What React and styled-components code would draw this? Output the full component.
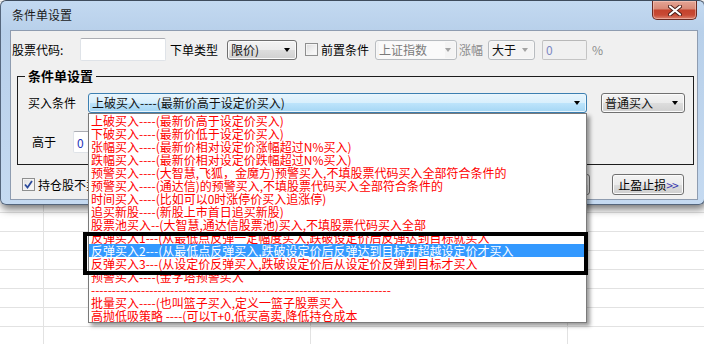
import React from 'react'
import styled, { createGlobalStyle } from 'styled-components'

const conditions = [
  '上破买入----(最新价高于设定价买入)',
  '下破买入----(最新价低于设定价买入)',
  '张幅买入----(最新价相对设定价涨幅超过N%买入)',
  '跌幅买入----(最新价相对设定价跌幅超过N%买入)',
  '预警买入----(大智慧,飞狐，金魔方)预警买入,不填股票代码买入全部符合条件的',
  '预警买入----(通达信)的预警买入,不填股票代码买入全部符合条件的',
  '时间买入----(比如可以0时涨停价买入追涨停)',
  '追买新股----(新股上市首日追买新股)',
  '股票池买入--(大智慧,通达信股票池)买入,不填股票代码买入全部',
  '反弹买入1---(从最低点反弹一定幅度买入,跌破设定价后反弹达到目标就买入',
  '反弹买入2---(从最低点反弹买入,跌破设定价后反弹达到目标并超越设定价才买入',
  '反弹买入3---(从设定价反弹买入,跌破设定价后从设定价反弹到目标才买入',
  '预警买入----(金字塔预警买入',
  '------------------------------------------------------------------------',
  '批量买入----(也叫篮子买入,定义一篮子股票买入',
  '高抛低吸策略 ----(可以T+0,低买高卖,降低持仓成本',
]
const selected = 10

const GlobalStyle = createGlobalStyle`
  html, body { margin: 0; padding: 0; }
  body {
    width: 704px;
    height: 344px;
    overflow: hidden;
    font-family: "Noto Sans CJK SC", "Microsoft YaHei", sans-serif;
    font-size: 12px;
    color: #000;
    background-color: #fff;
    background-image:
      linear-gradient(to right, transparent 43px, #e2e2e2 43px, #e2e2e2 44px, transparent 44px,
        transparent 310px, #e2e2e2 310px, #e2e2e2 311px, transparent 311px,
        transparent 567px, #e2e2e2 567px, #e2e2e2 568px, transparent 568px),
      repeating-linear-gradient(to bottom, transparent 0, transparent 18px, #e2e2e2 18px, #e2e2e2 19px);
    background-position: 0 0, 0 4px;
  }
`

const Window = styled.div`
  width: 703px;
  border: 1px solid #55667c;
  border-top-color: #3e4b5c;
  border-radius: 6px;
  background: linear-gradient(180deg, #c3d9f1 0%, #b8d0ea 30px, #c5daf1 100%);
  box-shadow: 1px 4px 9px rgba(0, 0, 0, 0.55);
`

const TitleBar = styled.div`
  display: flex;
  justify-content: space-between;
  align-items: flex-start;
  height: 29px;
`

const Title = styled.div`
  padding-left: 11px;
  line-height: 28px;
  font-size: 12px;
  color: #1a1a1a;
`

const CloseBtn = styled.div`
  display: flex;
  align-items: center;
  justify-content: center;
  box-sizing: border-box;
  width: 45px;
  height: 19px;
  margin-right: 7px;
  border: 1px solid #6a2a22;
  border-top: none;
  border-radius: 0 0 5px 5px;
  background: linear-gradient(180deg, #e4a595 0%, #d88a78 42%, #c4432d 52%, #c84a35 78%, #dc8470 100%);
  box-shadow: inset 0 0 0 1px rgba(255, 220, 210, 0.45);
`

const Client = styled.div`
  box-sizing: border-box;
  height: 170px;
  margin: 0 6px 4px 9px;
  padding: 7px 0 0 0;
  border: 1px solid #8e9cb0;
  background: #f0f0f0;
  display: flex;
  flex-direction: column;
`

const Row = styled.div`
  display: flex;
  align-items: center;
  height: ${(p) => p.$h}px;
  padding-left: ${(p) => p.$pl || 0}px;
  padding-right: ${(p) => p.$pr || 0}px;
  margin-top: ${(p) => p.$mt || 0}px;
`

const Label = styled.span`
  flex: none;
  width: ${(p) => (p.$w ? `${p.$w}px` : 'auto')};
  margin-left: ${(p) => p.$ml || 0}px;
  color: ${(p) => (p.$dim ? '#8c8c8c' : '#000')};
  white-space: nowrap;
  line-height: 16px;
`

const TextBox = styled.div`
  flex: none;
  box-sizing: border-box;
  width: ${(p) => p.$w}px;
  height: ${(p) => p.$h || 23}px;
  margin-left: ${(p) => p.$ml || 0}px;
  padding-left: 3px;
  border: 1px solid ${(p) => (p.$disabled ? '#c4c4c4' : '#dfe3e8')};
  border-top-color: ${(p) => (p.$disabled ? '#b8b8b8' : '#abadb3')};
  border-radius: 2px;
  background: ${(p) => (p.$disabled ? '#f0f0f0' : '#fff')};
  color: ${(p) => (p.$disabled ? '#7d88c4' : '#2433b8')};
  display: flex;
  align-items: center;
`

const Combo = styled.div`
  flex: none;
  position: relative;
  box-sizing: border-box;
  display: flex;
  align-items: center;
  justify-content: space-between;
  width: ${(p) => p.$w}px;
  height: ${(p) => p.$h || 20}px;
  margin-left: ${(p) => p.$ml || 0}px;
  padding: 0 6px 0 3px;
  border: 1px solid ${(p) => (p.$disabled ? '#b8bcc0' : '#707070')};
  border-radius: 3px;
  background: ${(p) =>
    p.$disabled
      ? '#f4f4f4'
      : 'linear-gradient(180deg, #f3f3f3 0%, #ebebeb 50%, #dddddd 51%, #d0d0d0 100%)'};
  box-shadow: inset 0 0 0 1px ${(p) => (p.$disabled ? '#f8f8f8' : '#fbfbfb')};
  color: ${(p) => (p.$dim ? '#7a7a7a' : '#111')};
  white-space: nowrap;
`

const OpenCombo = styled(Combo)`
  border-color: #3c7fb1;
  background: linear-gradient(180deg, #e8f5fd 0%, #d8effc 50%, #bde4fb 51%, #a4d6f4 100%);
  box-shadow: inset 0 0 0 1px #eaf6fd;
  padding-left: 3px;
`

const ComboText = styled.span`
  background: ${(p) => (p.$panel ? '#fafafa' : 'transparent')};
  padding-right: ${(p) => (p.$panel ? '18px' : '0')};
  line-height: 16px;
`

const Arrow = styled.span`
  width: 0;
  height: 0;
  border-left: 3.5px solid transparent;
  border-right: 3.5px solid transparent;
  border-top: 4px solid ${(p) => (p.$dim ? '#a3a3a3' : '#000')};
`

const CheckBox = styled.span`
  flex: none;
  box-sizing: border-box;
  width: 13px;
  height: 13px;
  margin-left: ${(p) => p.$ml || 0}px;
  border: 1px solid #8e8f8f;
  background: linear-gradient(135deg, #dcdcdc 0%, #f2f2f2 60%, #fbfbfb 100%);
  box-shadow: inset 0 0 0 1px #f4f4f4;
  display: flex;
  align-items: center;
  justify-content: center;
`

const Group = styled.fieldset`
  box-sizing: border-box;
  width: 677px;
  margin: 7px 0 0 6px;
  padding: 0 0 11px 0;
  border: 1px solid #1c1c1c;
  min-width: 0;
`

const Legend = styled.legend`
  margin-left: 7px;
  padding: 0 3px;
  font-size: 13px;
  font-weight: bold;
  line-height: 16px;
`

const ComboWrap = styled.div`
  position: relative;
  flex: none;
`

const DropList = styled.div`
  position: absolute;
  top: 100%;
  left: 0;
  z-index: 10;
  box-sizing: border-box;
  width: 499px;
  height: 210px;
  border: 1px solid #7a7a7a;
  background: #fff;
  box-shadow: 3px 3px 4px rgba(0, 0, 0, 0.4);
`

const Item = styled.div`
  height: 13px;
  line-height: 13px;
  padding-left: 2px;
  font-size: 12px;
  white-space: nowrap;
  color: ${(p) => (p.$active ? '#fff' : '#ff0000')};
  background: ${(p) => (p.$active ? '#3399ff' : 'transparent')};
`

const Marker = styled.div`
  position: absolute;
  left: -6px;
  top: 118px;
  width: 505px;
  height: 43px;
  box-sizing: border-box;
  border: 4px solid #000;
  pointer-events: none;
`

const Button = styled.div`
  flex: none;
  box-sizing: border-box;
  width: ${(p) => p.$w}px;
  height: 21px;
  margin-left: ${(p) => (p.$auto ? 'auto' : `${p.$ml || 0}px`)};
  border: 1px solid #707070;
  border-radius: 3px;
  background: linear-gradient(180deg, #f3f3f3 0%, #ebebeb 50%, #dddddd 51%, #cfcfcf 100%);
  box-shadow: inset 0 0 0 1px #fbfbfb;
  display: flex;
  align-items: center;
  justify-content: center;
  font-size: 12px;
  white-space: nowrap;
`

const More = styled.span`
  color: #3a3ab0;
  letter-spacing: -1px;
`

const CloseGlyph = () => (
  <svg width="14" height="11" viewBox="0 0 14 11">
    <path d="M2 1.5 L12 9.5 M12 1.5 L2 9.5" stroke="#4a1e18" strokeWidth="4" strokeLinecap="round" />
    <path d="M2 1.5 L12 9.5 M12 1.5 L2 9.5" stroke="#ffffff" strokeWidth="2.2" strokeLinecap="round" />
  </svg>
)

const Tick = () => (
  <svg width="9" height="9" viewBox="0 0 9 9">
    <path d="M1 4.5 L3.5 7.5 L8 1" fill="none" stroke="#2b4a9b" strokeWidth="1.8" />
  </svg>
)

const App = () => {
  return (
    <>
      <GlobalStyle />
      <Window>
        <TitleBar>
          <Title>条件单设置</Title>
          <CloseBtn>
            <CloseGlyph />
          </CloseBtn>
        </TitleBar>
        <Client>
          <Row $h={23} $pl={1}>
            <Label $w={68}>股票代码:</Label>
            <TextBox $w={86} />
            <Label $ml={4} $w={57}>下单类型</Label>
            <Combo $w={70}>
              <ComboText>限价)</ComboText>
              <Arrow />
            </Combo>
            <CheckBox $ml={8} />
            <Label $ml={3} $w={54}>前置条件</Label>
            <Combo $w={82} $disabled $dim>
              <ComboText $panel>上证指数</ComboText>
              <Arrow $dim />
            </Combo>
            <Label $ml={2} $w={29} $dim>涨幅</Label>
            <Combo $w={47} $disabled>
              <ComboText>大于</ComboText>
              <Arrow $dim />
            </Combo>
            <TextBox $w={45} $h={20} $ml={7} $disabled>0</TextBox>
            <Label $ml={5} $dim>%</Label>
          </Row>

          <Group>
            <Legend>条件单设置</Legend>
            <Row $h={20} $pl={10} $mt={9}>
              <Label $w={60}>买入条件</Label>
              <ComboWrap>
                <OpenCombo $w={499}>
                  <ComboText>{conditions[0]}</ComboText>
                  <Arrow />
                </OpenCombo>
                <DropList>
                  {conditions.map((text, i) => (
                    <Item key={i} $active={i === selected}>{text}</Item>
                  ))}
                  <Marker />
                </DropList>
              </ComboWrap>
              <Combo $w={84} $ml={14}>
                <ComboText>普通买入</ComboText>
                <Arrow />
              </Combo>
            </Row>
            <Row $h={22} $pl={14} $mt={18}>
              <Label $w={41}>高于</Label>
              <TextBox $w={120} $h={22}>0</TextBox>
            </Row>
          </Group>

          <Row $h={21} $pl={11} $pr={13} $mt={9}>
            <CheckBox>
              <Tick />
            </CheckBox>
            <Label $ml={3}>持仓股不卖出</Label>
            <Button $w={70} $auto />
            <Button $w={72} $ml={22}>
              止盈止损<More>&gt;&gt;</More>
            </Button>
          </Row>
        </Client>
      </Window>
    </>
  )
}

export default App
